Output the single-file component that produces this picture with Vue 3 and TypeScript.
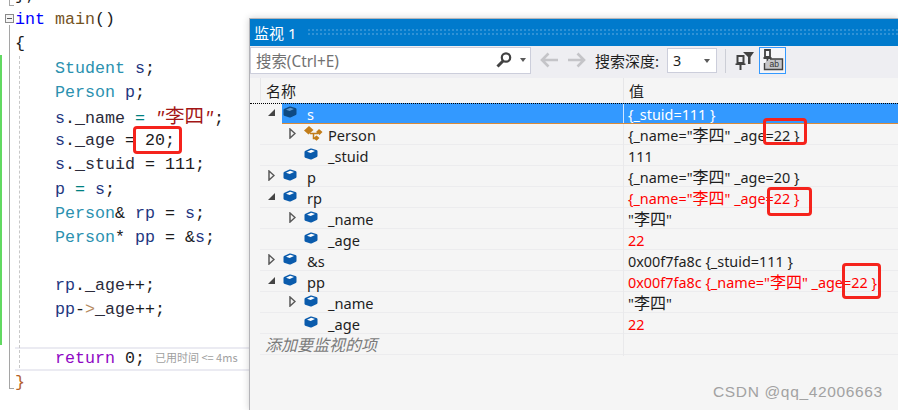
<script setup lang="ts">
type Tok = [string, string?]
const code: Tok[][] = [
  [['};']],
  [['int', 'kw'], [' '], ['main', 'fn'], ['()']],
  [['{']],
  [['    '], ['Student', 'ty'], [' '], ['s', 'v'], [';']],
  [['    '], ['Person', 'ty'], [' '], ['p', 'v'], [';']],
  [['    '], ['s', 'v'], ['.'], ['_name', 'm'], [' '], ['=', 'op'], [' '], ['"', 'str'], ['李四', 'cjk'], ['"', 'str'], [';']],
  [['    '], ['s', 'v'], ['.'], ['_age', 'm'], [' = 20;']],
  [['    '], ['s', 'v'], ['.'], ['_stuid', 'm'], [' = 111;']],
  [['    '], ['p', 'v'], [' '], ['=', 'op'], [' '], ['s', 'v'], [';']],
  [['    '], ['Person', 'ty'], ['& '], ['rp', 'v'], [' = '], ['s', 'v'], [';']],
  [['    '], ['Person', 'ty'], ['* '], ['pp', 'v'], [' = &'], ['s', 'v'], [';']],
  [[' ']],
  [['    '], ['rp', 'v'], ['.'], ['_age', 'm'], ['++;']],
  [['    '], ['pp', 'v'], ['-'], ['>', 'arrow'], ['_age', 'm'], ['++;']],
  [[' ']],
  [['    '], ['return', 'ret'], [' 0;']],
  [['}', 'brace']],
]

interface Row {
  name: string
  depth: number
  toggle: '' | 'open' | 'closed'
  icon: 'cube' | 'base'
  value: string
  red?: boolean
  sel?: boolean
}
const rows: Row[] = [
  { name: 's', depth: 0, toggle: 'open', icon: 'cube', value: '{_stuid=111 }', sel: true },
  { name: 'Person', depth: 1, toggle: 'closed', icon: 'base', value: '{_name="李四" _age=22 }' },
  { name: '_stuid', depth: 1, toggle: '', icon: 'cube', value: '111' },
  { name: 'p', depth: 0, toggle: 'closed', icon: 'cube', value: '{_name="李四" _age=20 }' },
  { name: 'rp', depth: 0, toggle: 'open', icon: 'cube', value: '{_name="李四" _age=22 }', red: true },
  { name: '_name', depth: 1, toggle: 'closed', icon: 'cube', value: '"李四"' },
  { name: '_age', depth: 1, toggle: '', icon: 'cube', value: '22', red: true },
  { name: '&s', depth: 0, toggle: 'closed', icon: 'cube', value: '0x00f7fa8c {_stuid=111 }' },
  { name: 'pp', depth: 0, toggle: 'open', icon: 'cube', value: '0x00f7fa8c {_name="李四" _age=22 }', red: true },
  { name: '_name', depth: 1, toggle: 'closed', icon: 'cube', value: '"李四"' },
  { name: '_age', depth: 1, toggle: '', icon: 'cube', value: '22', red: true },
]
const parts = (s: string) => s.split(/([\u4e00-\u9fff]+)/)
</script>

<template>
  <div class="page">
    <div class="editor">
      <div v-for="(line, i) in code" :key="i" class="code-line" :class="{ current: i === 15 }">
        <span v-for="(t, j) in line" :key="j" :class="t[1]">{{ t[0] }}</span>
        <span v-if="i === 15" class="perf">已用时间 &lt;= 4ms</span>
      </div>
    </div>
    <i class="green-bar"></i>
    <i class="gutter"></i>
    <i class="gutter-top"></i>
    <i class="indent"></i>
    <i class="fold"></i>
    <i class="red-box box-code"></i>

    <section class="watch">
      <header class="title">
        <span>监视 1</span>
        <i class="dots"></i>
      </header>
      <div class="toolbar">
        <div class="search">
          <span class="search-text">搜索(Ctrl+E)</span>
          <svg class="glass" width="18" height="18" viewBox="0 0 18 18">
            <circle cx="11" cy="6.5" r="4.2" fill="none" stroke="#424242" stroke-width="2.2" />
            <path d="M8 10 L2.5 15.5" stroke="#424242" stroke-width="3" />
          </svg>
          <i class="tri"></i>
        </div>
        <svg class="arrow-icon" width="19" height="16" viewBox="0 0 19 16">
          <path d="M8.5 1.5 L2 8 L8.5 14.5 M2.5 8 H18" fill="none" stroke="#c4c4c8" stroke-width="2.6" />
        </svg>
        <svg class="arrow-icon next" width="19" height="16" viewBox="0 0 19 16">
          <path d="M10.5 1.5 L17 8 L10.5 14.5 M16.5 8 H1" fill="none" stroke="#c4c4c8" stroke-width="2.6" />
        </svg>
        <span class="depth-label">搜索深度:</span>
        <div class="select"><span>3</span><i class="tri"></i></div>
        <i class="sep"></i>
        <svg class="pin" width="20" height="22" viewBox="0 0 20 22">
          <path d="M2.5 7 H8.5 V14 H2.5 Z" fill="#eeeef2" stroke="#424242" stroke-width="2" />
          <path d="M0.5 14.5 H10.5 V16 H0.5 Z M4.5 16 H6.5 V21 H4.5 Z" fill="#424242" />
          <path d="M8 3 H19 L15.5 8 V15 H13 V8 Z" fill="#424242" />
        </svg>
        <div class="tab-btn">
          <svg width="25" height="25" viewBox="0 0 25 25">
            <path d="M5 2 H10 V9 H5 Z M3.5 10 H11.5 M7.5 10 V17" fill="none" stroke="#424242" stroke-width="1.8" />
            <path d="M10 11 H22.5 V21.5 H4.5 V15" fill="#c6c6ca" stroke="#424242" stroke-width="1.4" />
            <text x="9.5" y="19" class="ab">ab</text>
          </svg>
        </div>
      </div>
      <div class="grid-head">
        <div class="head-name">名称</div>
        <div class="head-value">值</div>
      </div>
      <div
        v-for="(r, i) in rows"
        :key="i"
        class="row"
        :class="{ selected: r.sel }"
      >
        <div class="name-cell" :class="'d' + r.depth">
          <span class="toggle">
            <i v-if="r.toggle === 'open'" class="t-open"></i>
            <svg v-else-if="r.toggle === 'closed'" width="7" height="11" viewBox="0 0 7 11">
              <path d="M1 1 L6 5.5 L1 10 Z" fill="#f5f5f5" stroke="#595959" stroke-width="1.5" />
            </svg>
          </span>
          <span class="name-inner">
            <svg v-if="r.icon === 'cube'" class="ic" width="14" height="12" viewBox="0 0 14 12">
              <path d="M0.5 4 Q0.5 3 1.5 2.7 L6.5 0.5 Q7 0.3 7.5 0.5 L12.5 2 Q13.5 2.3 13.5 3.2 V7.8 Q13.5 8.6 12.8 9 L7.5 11.4 Q7 11.6 6.5 11.4 L1.2 9.8 Q0.5 9.5 0.5 8.8 Z" :fill="r.sel ? '#0e4a82' : '#0a5bac'" />
              <path d="M3 3.7 L7.2 1.7 L11 2.9 L6.7 5 Z" :fill="r.sel ? '#5c93c8' : '#ffffff'" />
            </svg>
            <svg v-else class="ic base" width="19" height="15" viewBox="0 0 19 15">
              <path d="M0 4.5 L5 0 L9.5 4 L4.5 8.5 Z" fill="#c27d1a" />
              <path d="M6 7.5 H14 M9.5 7.5 V12.5 H12" fill="none" stroke="#c27d1a" stroke-width="1.5" />
              <path d="M12 6 L15 3 L18.5 6 L15.5 9 Z M9.5 12 L12.5 9.5 L15.5 12 L12.5 14.8 Z" fill="#c27d1a" />
            </svg>
            <span class="nm">{{ r.name }}</span>
          </span>
        </div>
        <div class="value-cell" :class="{ red: r.red }">
          <span v-for="(p, k) in parts(r.value)" :key="k" :class="{ han: k % 2 === 1 }">{{ p }}</span>
        </div>
      </div>
      <div class="row add">
        <div class="name-cell add-name">添加要监视的项</div>
        <div class="value-cell"></div>
      </div>
    </section>

    <i class="red-box box-a"></i>
    <i class="red-box box-b"></i>
    <i class="red-box box-c"></i>
    <span class="watermark">CSDN @qq_42006663</span>
  </div>
</template>

<style>
html, body { margin: 0; background: #fff; }
</style>

<style scoped>
.page {
  position: relative;
  width: 898px;
  height: 410px;
  overflow: hidden;
  background: #fff;
}
.editor {
  margin-top: -16px;
  padding-left: 15px;
  font: 16.67px/24.2px "Liberation Mono", "Noto Sans CJK SC", monospace;
  color: #1c1c1c;
  white-space: pre;
}
.code-line { height: 24.2px; position: relative; }
.code-line.current {
  box-shadow: inset 0 2px 0 #ebebf2, inset 0 -2px 0 #ebebf2;
}
.kw { color: #0000ff; }
.fn { color: #74531f; }
.ty { color: #2b91af; }
.v { color: #1f377f; }
.m { color: #2b2b3a; }
.op { color: #008080; }
.str { color: #a31515; font-style: italic; }
.cjk { color: #a31515; font: 19.5px/1 "Noto Sans CJK SC", sans-serif; }
.ret { color: #8f08c4; }
.arrow { color: #b58a5e; }
.brace { color: #b4602a; }
.perf {
  margin-left: 10px;
  font: 11px/1 "Noto Sans CJK SC", "Liberation Sans", sans-serif;
  color: #a0a0a0;
  vertical-align: 1px;
}
.green-bar {
  position: absolute;
  left: 0;
  top: 55px;
  width: 2px;
  height: 290px;
  background: #62d962;
}
.gutter {
  position: absolute;
  left: 9px;
  top: 25px;
  width: 4px;
  height: 363px;
  border-left: 1px solid #a5a5a5;
  border-bottom: 1px solid #a5a5a5;
}
.gutter-top {
  position: absolute;
  left: 9px;
  top: 0;
  width: 4px;
  height: 5px;
  border-left: 1px solid #a5a5a5;
  border-bottom: 1px solid #a5a5a5;
}
.indent {
  position: absolute;
  left: 19px;
  top: 56px;
  height: 312px;
  border-left: 1px dashed #c8c8c8;
}
.fold {
  position: absolute;
  left: 5px;
  top: 14px;
  width: 7px;
  height: 7px;
  border: 1px solid #8a8a8a;
  background: linear-gradient(#555, #555) center / 5px 1px no-repeat, #f5f5f5;
}
.red-box {
  position: absolute;
  border: 3px solid #f5231c;
  border-radius: 4px;
  box-sizing: border-box;
}
.box-code { left: 133px; top: 126px; width: 49px; height: 28px; }
.box-a { left: 763px; top: 118px; width: 44px; height: 27px; }
.box-b { left: 767px; top: 187px; width: 45px; height: 29px; }
.box-c { left: 842px; top: 263px; width: 39px; height: 36px; }

.watch {
  position: absolute;
  left: 249px;
  top: 18px;
  right: 0;
  bottom: 0;
  border-left: 1px solid #b4b4b8;
  border-top: 1px solid #b4b4b8;
  box-shadow: 0 0 7px rgba(0, 0, 0, 0.18);
  background: #f5f5f5;
  font: 14.4px "Noto Sans", "Noto Sans CJK SC", sans-serif;
  color: #1e1e1e;
}
.title {
  display: flex;
  align-items: center;
  height: 27px;
  background: #007acc;
  color: #fff;
  padding-left: 4px;
  font-size: 15px;
  gap: 10px;
}
.title span { white-space: nowrap; }
.dots {
  flex: 1;
  height: 9px;
  margin-left: 1px;
  background-image: radial-gradient(#2f92d6 0.8px, transparent 1px);
  background-size: 4px 4px;
}
.toolbar {
  display: flex;
  align-items: center;
  height: 32px;
  background: #eeeef2;
}
.search {
  position: relative;
  box-sizing: border-box;
  display: flex;
  align-items: center;
  width: 281px;
  height: 27px;
  margin-top: -4px;
  background: #fff;
  border: 1px solid #cccedb;
  padding-left: 5px;
}
.search-text { flex: 1; color: #717171; font-size: 15.4px; }
.glass { margin-right: 7px; }
.tri {
  width: 0;
  height: 0;
  border: 3.5px solid transparent;
  border-top: 4px solid #5a5a5a;
  border-bottom: 0;
}
.search .tri { margin-right: 4px; }
.arrow-icon { margin: -4px 0 0 9px; }
.arrow-icon.next { margin-left: 8px; }
.depth-label { margin: -3px 0 0 9px; font-size: 15px; white-space: nowrap; }
.select {
  box-sizing: border-box;
  display: flex;
  align-items: center;
  justify-content: space-between;
  width: 50px;
  height: 25px;
  margin: -3px 0 0 8px;
  padding: 0 6px 0 5px;
  background: #fff;
  border: 1px solid #cccedb;
}
.sep { width: 1px; height: 24px; margin: -3px 0 0 8px; background: #ccced6; }
.pin { margin: -4px 0 0 9px; }
.tab-btn {
  box-sizing: border-box;
  display: flex;
  align-items: center;
  justify-content: center;
  width: 27px;
  height: 27px;
  margin: -3px 0 0 4px;
  border: 1px solid #3399ff;
  background: #f5f5f8;
}
.ab { font: 8.5px "Liberation Sans", sans-serif; fill: #333; }
.grid-head {
  display: grid;
  grid-template-columns: 373px 1fr;
  height: 25px;
  line-height: 26px;
  font-size: 15px;
}
.head-name { padding-left: 16px; position: relative; }
.head-name::before {
  content: "";
  position: absolute;
  left: 10px;
  top: 0;
  bottom: 3px;
  width: 1px;
  background: #e6e6e8;
}
.head-value { padding-left: 5px; border-left: 1px solid #e6e6e8; }
.row {
  position: relative;
  isolation: isolate;
  display: grid;
  grid-template-columns: 373px 1fr;
  height: 21px;
  box-sizing: border-box;
  line-height: 24px;
  white-space: nowrap;
}
.row::after {
  content: "";
  position: absolute;
  z-index: -1;
  left: 10px;
  right: 0;
  bottom: 0;
  height: 1px;
  background: #ececee;
}
.name-cell {
  display: flex;
  align-items: center;
  height: 20px;
  min-width: 0;
}
.toggle {
  flex: none;
  display: flex;
  align-items: center;
  justify-content: center;
  width: 7px;
  height: 20px;
  margin-left: 18px;
  margin-top: -2px;
}
.d1 .toggle { margin-left: 39px; }
.t-open {
  width: 0;
  height: 0;
  border-style: solid;
  border-width: 0 0 7px 7px;
  border-color: transparent transparent #444 transparent;
}
.name-inner {
  display: flex;
  align-items: center;
  flex: 1;
  height: 20px;
  padding-left: 8px;
}
.ic { flex: none; margin-top: -3px; }
.ic.base { margin-top: -2px; }
.nm { position: absolute; left: 57px; top: -1px; font-size: 14.6px; }
.d1 .nm { left: 78px; }
.value-cell {
  padding-left: 4px;
  border-left: 1px solid #e9e9eb;
}
.han { font-size: 16px; line-height: 1; }
.red { color: #ff0000; }
.selected { color: #fff; }
.selected::before {
  content: "";
  position: absolute;
  left: 0;
  right: 0;
  top: 0;
  border-top: 1px dotted #000;
  z-index: 1;
}
.selected::after {
  left: 32px;
  background: #d88a3a;
  z-index: 1;
}
.selected .name-inner {
  background: #3399ff;
  padding-left: 0;
  height: 21px;
}
.selected .value-cell {
  background: #3399ff;
  height: 21px;
  border-left: 1px solid #cfe6ff;
}
.selected .name-cell { height: 21px; }
.selected .toggle { margin-right: 7px; }
.selected .name-inner .ic { margin-left: 1px; }
.add-name {
  padding-left: 15px;
  color: #7a7a7a;
  font-style: italic;
  font-size: 16px;
  height: 22px;
}
.watermark {
  position: absolute;
  left: 713px;
  top: 383px;
  font: 15.5px "Liberation Sans", sans-serif;
  letter-spacing: 0.65px;
  color: #a2a2a2;
  white-space: nowrap;
}
</style>
